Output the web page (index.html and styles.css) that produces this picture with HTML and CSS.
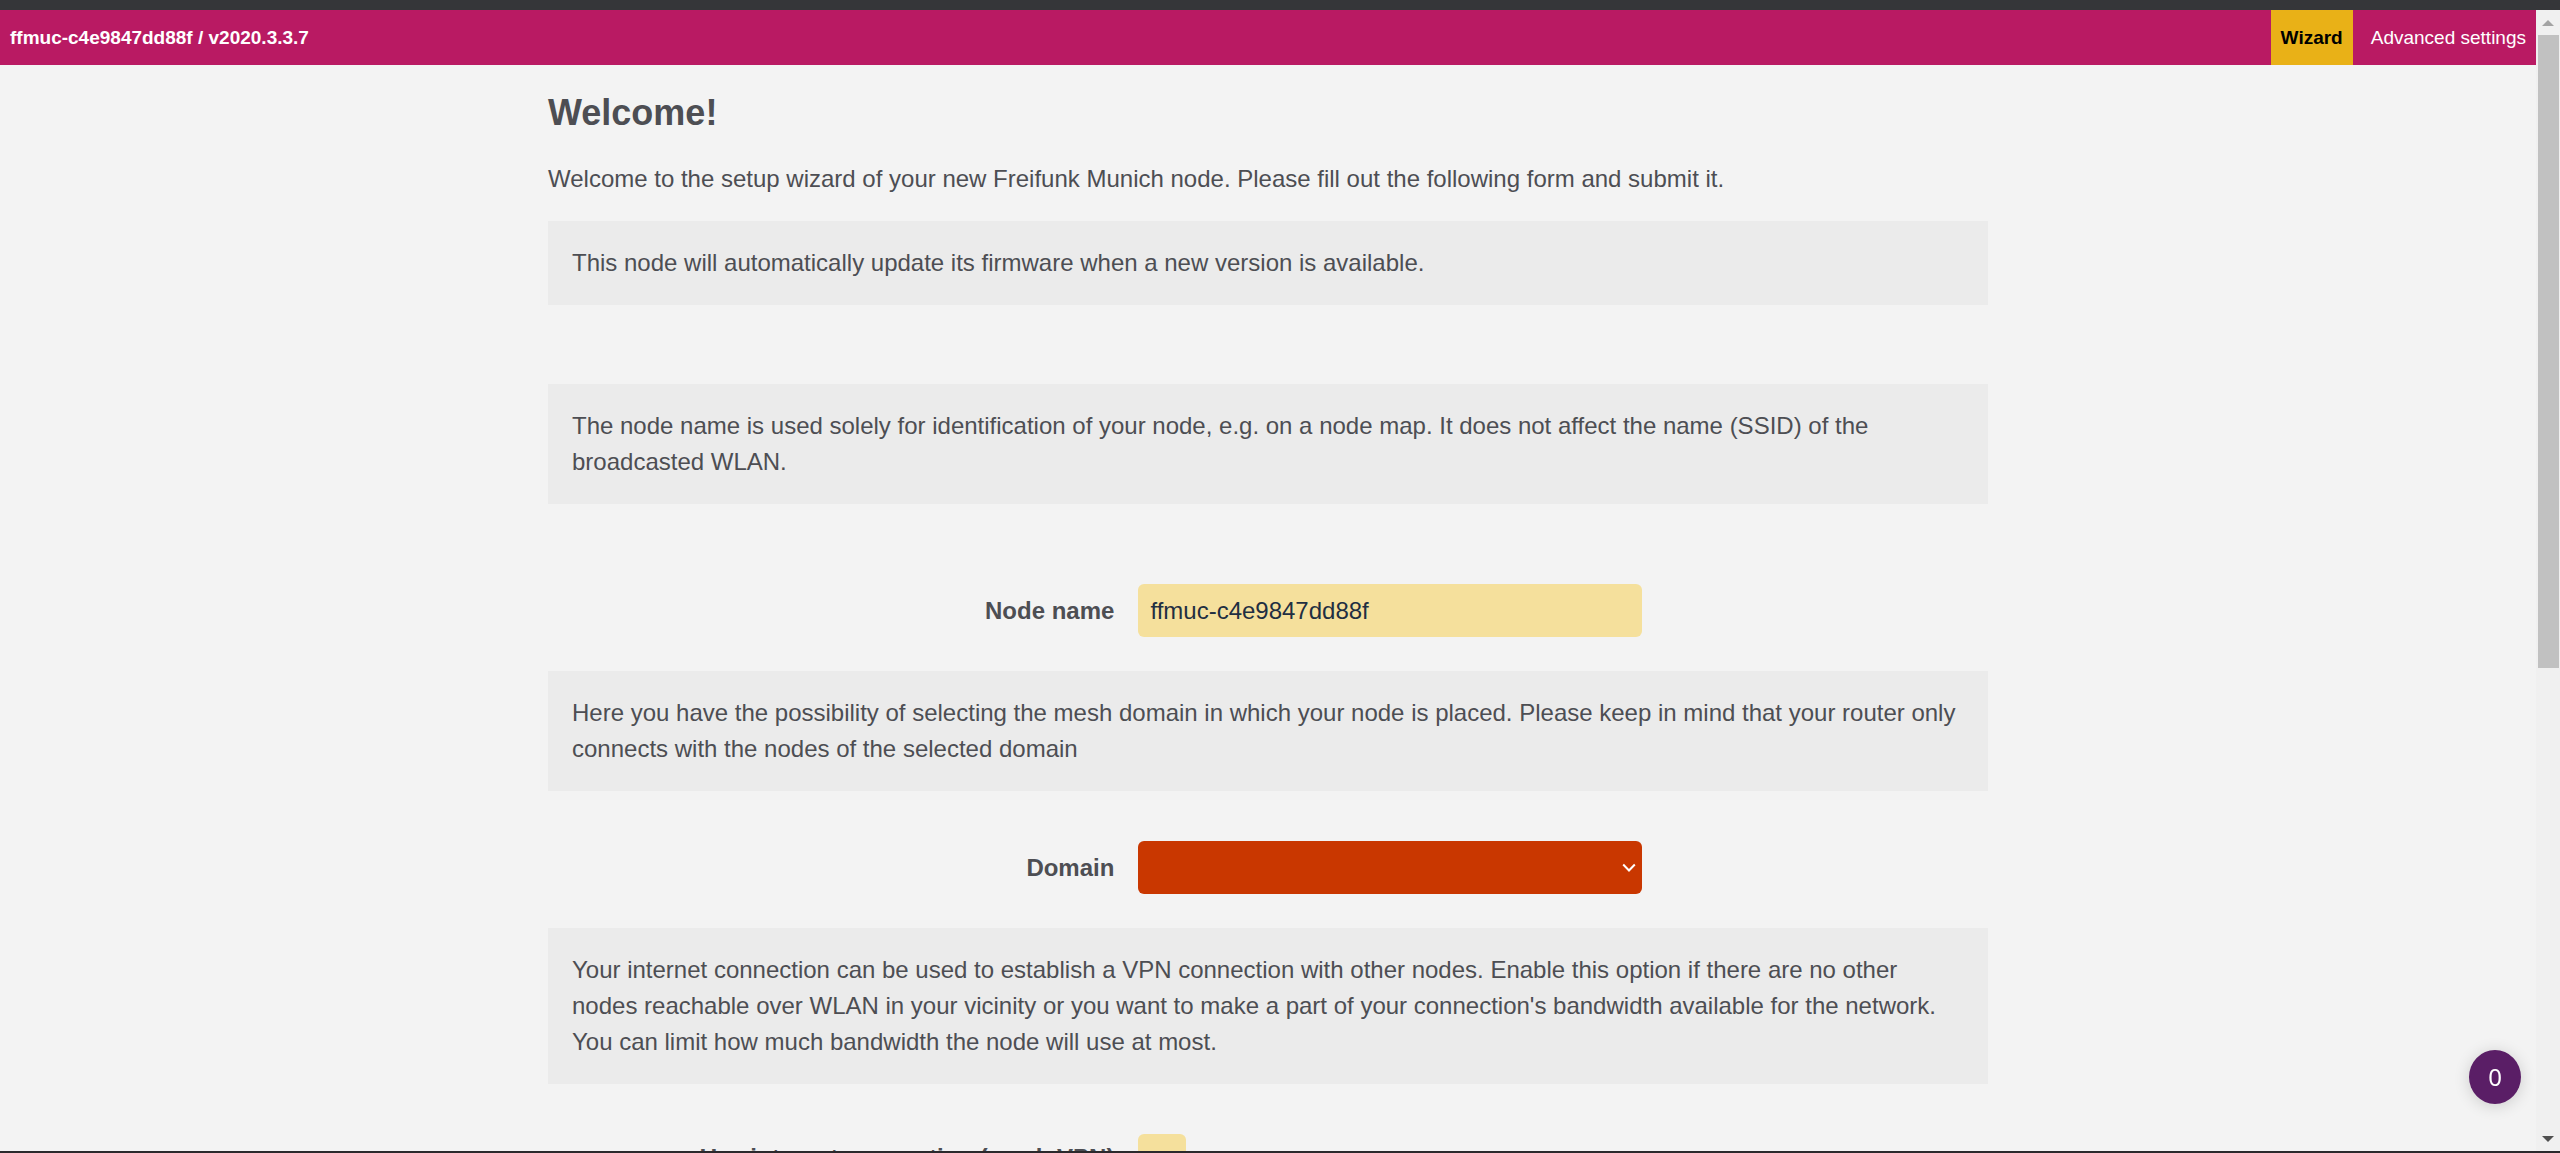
FILE: index.html
```html
<!DOCTYPE html>
<html lang="en">
<head>
<meta charset="utf-8">
<title>Wizard - ffmuc-c4e9847dd88f</title>
<link rel="stylesheet" href="styles.css">
</head>
<body>
<div class="viewport">
  <div class="page">
    <header class="topbar">
      <div class="hostname">ffmuc-c4e9847dd88f / v2020.3.3.7</div>
      <nav class="tabs">
        <a class="tab tab-active" href="#wizard">Wizard</a>
        <a class="tab" href="#advanced">Advanced settings</a>
      </nav>
    </header>
    <main class="content">
      <h1 class="title">Welcome!</h1>
      <p class="intro">Welcome to the setup wizard of your new Freifunk Munich node. Please fill out the following form and submit it.</p>
      <form>
        <section class="section section-spaced">
          <p class="note">This node will automatically update its firmware when a new version is available.</p>
        </section>
        <section class="section">
          <p class="note note-spaced">The node name is used solely for identification of your node, e.g. on a node map. It does not affect the name (SSID) of the broadcasted WLAN.</p>
          <div class="field">
            <label class="label" for="hostname">Node name</label>
            <input class="text-input" id="hostname" type="text" value="ffmuc-c4e9847dd88f">
          </div>
        </section>
        <section class="section">
          <p class="note">Here you have the possibility of selecting the mesh domain in which your node is placed. Please keep in mind that your router only connects with the nodes of the selected domain</p>
          <div class="field">
            <label class="label" for="domain">Domain</label>
            <div class="select-wrap">
              <select class="select" id="domain"><option value=""></option></select>
              <svg class="chevron" width="14" height="10" viewBox="0 0 14 10" aria-hidden="true"><path d="M1.2 1.5 7 7.500l5.800-6" fill="none" stroke="#fff" stroke-width="2"/></svg>
            </div>
          </div>
        </section>
        <section class="section">
          <p class="note">Your internet connection can be used to establish a VPN connection with other nodes. Enable this option if there are no other nodes reachable over WLAN in your vicinity or you want to make a part of your connection's bandwidth available for the network. You can limit how much bandwidth the node will use at most.</p>
          <div class="field">
            <label class="label" for="meshvpn">Use internet connection (mesh VPN)</label>
            <input class="checkbox" id="meshvpn" type="checkbox">
          </div>
        </section>
      </form>
    </main>
  </div>
  <div class="scrollbar" aria-hidden="true">
    <svg class="arrow" width="12" height="6" viewBox="0 0 12 6"><path d="M0 6 6 0l6 6z" fill="#a3a3a3"/></svg>
    <div class="track"><div class="thumb"></div></div>
    <svg class="arrow" width="12" height="6" viewBox="0 0 12 6"><path d="M0 0h12L6 6z" fill="#505050"/></svg>
  </div>
</div>
<button class="bubble" type="button">0</button>
</body>
</html>
```
FILE: styles.css
```css
* {
  box-sizing: border-box;
}

body {
  margin: 0;
  background: #f3f3f3;
  color: #4d4e53;
  font: 24px/36px "Liberation Sans", Arial, sans-serif;
}

.viewport {
  display: flex;
  height: 100vh;
  overflow: hidden;
  border-top: 10px solid #353639;
  border-bottom: 2px solid #2b292c;
}

.page {
  flex: 1;
  overflow: hidden;
}

.topbar {
  display: flex;
  justify-content: space-between;
  background: #b91a63;
  color: #fff;
  font-size: 19px;
  line-height: 55px;
}

.hostname {
  padding: 0 10px;
  font-weight: bold;
}

.tabs {
  display: flex;
  gap: 8px;
}

.tab {
  padding: 0 10px;
  color: #fff;
  text-decoration: none;
}

.tab-active {
  background: #e9b117;
  color: #000;
  font-weight: bold;
}

.content {
  max-width: 1440px;
  margin: 0 auto;
}

.title {
  margin: 0;
  padding-top: 21px;
  font-size: 36px;
  line-height: 54px;
}

.intro {
  margin: 21px 0 24px;
}

.section-spaced {
  margin-bottom: 79px;
}

.note {
  margin: 0 0 50px;
  padding: 24px;
  background: #ebebeb;
}

.note-spaced {
  margin-bottom: 80px;
}

.field {
  display: grid;
  grid-template-columns: 41% 35%;
  align-items: center;
  margin-bottom: 34px;
}

.label {
  padding-right: 24px;
  font-weight: bold;
  text-align: right;
}

.text-input,
.select {
  width: 100%;
  height: 53px;
  padding: 0 12px;
  border: 0;
  border-radius: 6px;
  font: inherit;
}

.text-input {
  background: #f5e09c;
  color: #1f2f42;
}

.select-wrap {
  display: grid;
  align-items: center;
}

.select,
.chevron {
  grid-area: 1 / 1;
}

.select {
  appearance: none;
  background: #c93700;
  color: #fff;
}

.chevron {
  justify-self: end;
  margin-right: 6px;
  pointer-events: none;
}

.checkbox {
  appearance: none;
  width: 48px;
  height: 48px;
  margin: 0;
  border-radius: 6px;
  background: #f5e09c;
}

.scrollbar {
  display: flex;
  flex-direction: column;
  align-items: center;
  width: 24px;
  padding: 10px 0 9px;
  background: #f0f0f0;
}

.arrow {
  flex: none;
}

.track {
  flex: 1;
  width: 21px;
  margin: 9px 0;
}

.thumb {
  height: 58%;
  background: #c1c1c1;
}

.bubble {
  position: fixed;
  right: 39px;
  bottom: 49px;
  width: 52px;
  height: 54px;
  padding: 0;
  border: 0;
  border-radius: 50%;
  background: #5a1e66;
  box-shadow: 0 2px 16px rgba(0, 0, 0, 0.16);
  color: #fff;
  font: 24px/52px "Noto Sans", sans-serif;
}
```
